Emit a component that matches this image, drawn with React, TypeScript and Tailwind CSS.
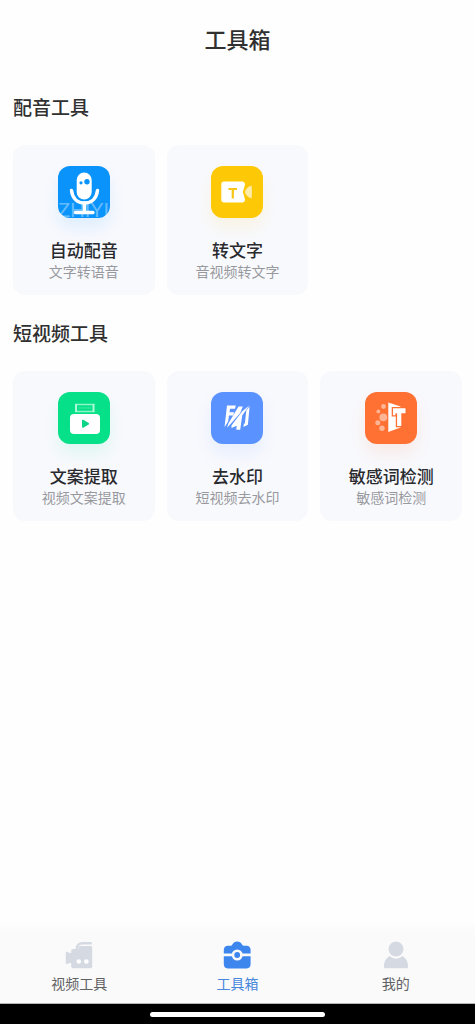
import type { ReactNode } from "react";

type Tool = {
  title: string;
  subtitle: string;
  tile: string;
  icon: ReactNode;
};

const MicIcon = () => (
  <svg viewBox="0 0 52 52" className="size-full overflow-visible" aria-hidden="true">
    <rect x="18.700" y="6.500" width="15" height="27" rx="7.500" fill="#fff" />
    <circle cx="23" cy="16.800" r="1.600" fill="#0a94fb" />
    <circle cx="29" cy="15.800" r="2.700" fill="#0a94fb" />
    <path d="M13.500 24.500c1 8 6 12.500 13 12.500s12-4.500 13-12.500" fill="none" stroke="#fff" strokeWidth="3.400" strokeLinecap="round" />
    <path d="M26.500 37v9M17.500 46.500h17.500" fill="none" stroke="#fff" strokeWidth="3.400" strokeLinecap="round" />
    <text x="0" y="51" fontSize="20" fill="#fff" fillOpacity="0.4" fontFamily="Liberation Sans, sans-serif">ZHIYI</text>
  </svg>
);

const TranscribeIcon = () => (
  <svg viewBox="0 0 52 52" className="size-full" aria-hidden="true">
    <path d="M40.500 19.500c-3 1-6.500 4-6.500 6.500s3.500 5.500 6.500 6.500c.6-4 .6-9 0-13z" fill="#fff" fillOpacity="0.65" />
    <path d="M13 15.500h18c2 0 3 1.500 3 3.200l-1.800 6.100c-.3 1-.3 1.500 0 2.400l1.800 6c0 2-1 3.300-3 3.300H13c-1.700 0-2.700-1-2.700-2.700V18.200c0-1.700 1-2.700 2.700-2.700z" fill="#fff" />
    <path d="M17.500 23h8.500M21.800 23v9.500" fill="none" stroke="#f8c516" strokeWidth="2.200" />
  </svg>
);

const ExtractIcon = () => (
  <svg viewBox="0 0 52 52" className="size-full" aria-hidden="true">
    <path d="M17 12.500h19.500M17 19.500h19.500" stroke="#8ff5c8" strokeWidth="1.400" />
    <path d="M18 12v8M35.500 12v8" stroke="#adf8d7" strokeWidth="2" />
    <path d="M20 16h13" stroke="#3eeaa0" strokeWidth="1" />
    <rect x="12" y="22" width="30" height="20" rx="4" fill="#fff" />
    <path d="M24.800 28.500v6.500l5.500-3.200z" fill="#0bd487" stroke="#0bd487" strokeWidth="1.600" strokeLinejoin="round" />
  </svg>
);

const WatermarkIcon = () => (
  <svg viewBox="0 0 52 52" className="size-full" aria-hidden="true">
    <g fill="#fff">
      <path d="M16 13.500h8.800l-.8 3.200h-5l-.5 3.600h4.500l-.8 3.200h-4.200l-.9 6-3.600 5.700z" />
      <path d="M27.500 14.500h4.300l-2.600 6.500-9.200 10.500-4 4.300 1.500-4.500z" />
      <path d="M38.300 13.500 31 19.500 20.500 33.500v2.500l5.200-2.300-.4 4h3.900l2-14.200z" />
      <path d="M38.600 14.500 36.900 32.800l-4.500 2.200.5-3.500h1l1.400-13z" />
    </g>
  </svg>
);

const DetectIcon = () => (
  <svg viewBox="0 0 52 52" className="size-full" aria-hidden="true">
    <g fill="#ffb595">
      <circle cx="18.500" cy="14.500" r="2.400" />
      <circle cx="13.300" cy="19.500" r="1.900" />
      <circle cx="18.300" cy="25.300" r="3.900" />
      <circle cx="12.800" cy="30.700" r="2.500" />
      <circle cx="17" cy="36.200" r="2.700" />
    </g>
    <path d="M23.300 10.500 35.500 14.500v21L23.300 40z" fill="#fff" />
    <path d="M28 16.200h12.500v5h-4.200v12.800h-4.200V21.200h-1.700v2H28z" fill="#fff" stroke="#ff7033" strokeWidth="2.600" paintOrder="stroke" />
  </svg>
);

const CameraIcon = () => (
  <svg viewBox="0 0 28 28" className="size-7" aria-hidden="true">
    <path d="M.8 10.500 5 12v10l-4.200 1.300z" fill="#d5d9e2" />
    <path d="M5 12h1.200V10c0-1.300.8-2 2-2H11l2.500-3h12.300c.8 0 1.400.6 1.400 1.400V25.500c0 1.200-.8 1.800-1.800 1.800H8c-1.200 0-1.800-.8-1.800-2V22H5z" fill="#d5d9e2" />
    <path d="M12.800 8.300c.2-3.800 2.300-4.300 5.200-4.300h9.500" fill="none" stroke="#fafafa" strokeWidth="1" />
    <path d="M11.800 8c.2-4.500 2.200-5.700 6-5.700h8" fill="none" stroke="#d5d9e2" strokeWidth="2.400" strokeLinecap="round" />
    <circle cx="13.800" cy="20.500" r="2.300" fill="#fff" />
    <circle cx="21.400" cy="20.500" r="2.300" fill="#fff" />
  </svg>
);

const ToolboxIcon = () => (
  <svg viewBox="0 0 28 28" className="size-7" aria-hidden="true">
    <path d="M.8 12.500V9c0-2.700 1.500-4.300 4-4.300h2.700c.8 0 1.200-.4 1.700-1C10.500 1.700 12 .6 14.200.6s3.800 1.100 5 3.100c.5.600.9 1 1.700 1h2.700c2.500 0 4 1.600 4 4.300v3.500z" fill="#3d86ee" />
    <path d="M.8 15.200h26.800v7.800c0 2.700-1.300 4.400-4 4.400H4.800c-2.700 0-4-1.700-4-4.400z" fill="#3d86ee" />
    <circle cx="14.200" cy="14" r="4.200" fill="#3d86ee" stroke="#fafafa" strokeWidth="2.600" />
  </svg>
);

const PersonIcon = () => (
  <svg viewBox="0 0 28 28" className="size-7" aria-hidden="true">
    <circle cx="14" cy="8" r="7.500" fill="#d5d9e2" />
    <path d="M8 15c3.500 3.500 8.500 3.500 12 0 3.300 1.300 6 5.500 6 9.500v1.300c0 1-.5 1.500-1.500 1.500h-21c-1 0-1.500-.5-1.500-1.500v-1.300c0-4 2.700-8.200 6-9.500z" fill="#d5d9e2" />
  </svg>
);

const groups: { name: string; tools: Tool[] }[] = [
  {
    name: "配音工具",
    tools: [
      {
        title: "自动配音",
        subtitle: "文字转语音",
        tile: "bg-[#0a94fb] shadow-[0_10px_16px_#0a94fb1a]",
        icon: <MicIcon />,
      },
      {
        title: "转文字",
        subtitle: "音视频转文字",
        tile: "bg-[#fdc806] shadow-[0_10px_16px_#fdc8061a]",
        icon: <TranscribeIcon />,
      },
    ],
  },
  {
    name: "短视频工具",
    tools: [
      {
        title: "文案提取",
        subtitle: "视频文案提取",
        tile: "bg-[#06e089] shadow-[0_10px_16px_#06e0891a]",
        icon: <ExtractIcon />,
      },
      {
        title: "去水印",
        subtitle: "短视频去水印",
        tile: "bg-[#5a92ff] shadow-[0_10px_16px_#5a92ff1a]",
        icon: <WatermarkIcon />,
      },
      {
        title: "敏感词检测",
        subtitle: "敏感词检测",
        tile: "bg-[#ff7033] shadow-[0_10px_16px_#ff70331a]",
        icon: <DetectIcon />,
      },
    ],
  },
];

const tabs = [
  { label: "视频工具", icon: <CameraIcon />, active: false },
  { label: "工具箱", icon: <ToolboxIcon />, active: true },
  { label: "我的", icon: <PersonIcon />, active: false },
];

function ToolCard({ tool }: { tool: Tool }) {
  return (
    <button type="button" className="flex flex-col items-center rounded-xl bg-[#f8f9fd] pt-[21px] pb-3.5">
      <span className={`mb-[21px] block size-[52px] rounded-xl ${tool.tile}`}>{tool.icon}</span>
      <span className="text-[17px] leading-[22px] font-medium text-[#292a2e]">{tool.title}</span>
      <span className="text-sm leading-5 text-[#98999d]">{tool.subtitle}</span>
    </button>
  );
}

export default function App() {
  return (
    <div className="flex min-h-screen flex-col bg-[#fefefe] font-['Noto_Sans_CJK_SC',sans-serif] text-[#303030]">
      <header className="flex h-[75px] items-center justify-center">
        <h1 className="text-[22px] leading-8 font-medium">工具箱</h1>
      </header>

      <main className="flex grow flex-col gap-6 px-[13px] pt-[18px]">
        {groups.map((group) => (
          <section key={group.name} className="flex flex-col gap-6">
            <h2 className="text-[19px] leading-7 font-medium">{group.name}</h2>
            <div className="grid grid-cols-3 gap-3">
              {group.tools.map((tool) => (
                <ToolCard key={tool.title} tool={tool} />
              ))}
            </div>
          </section>
        ))}
      </main>

      <footer>
        <nav className="grid grid-cols-3 border-b border-[#b5b7b6] bg-linear-to-b from-[#fefefe] to-[#fafafa] to-15% pt-5 pb-2">
          {tabs.map((tab) => (
            <a
              key={tab.label}
              href="#"
              aria-current={tab.active ? "page" : undefined}
              className={`flex flex-col items-center gap-0.5 text-sm leading-6 ${tab.active ? "text-[#4788dc]" : "text-[#606163]"}`}
            >
              {tab.icon}
              {tab.label}
            </a>
          ))}
        </nav>
        <div className="flex h-5 items-center justify-center bg-black">
          <div className="h-[5px] w-[37%] rounded-full bg-white" />
        </div>
      </footer>
    </div>
  );
}
